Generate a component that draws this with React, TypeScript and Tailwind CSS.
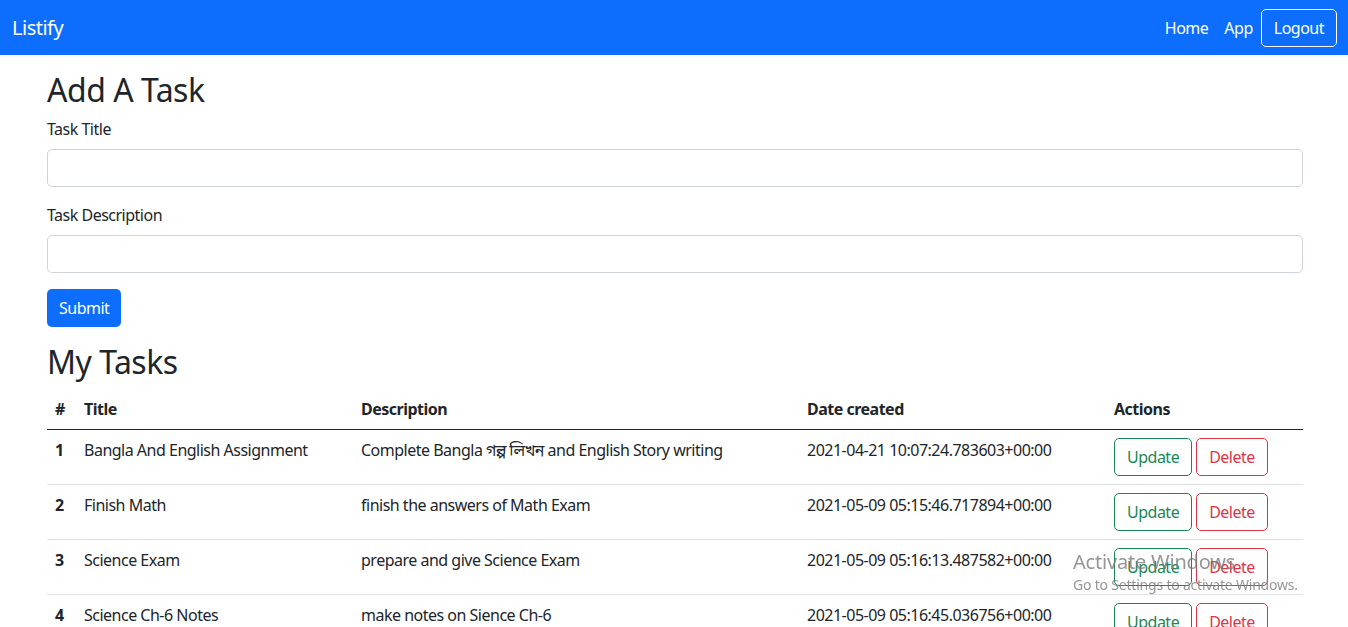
const tasks = [
  {
    id: 1,
    title: "Bangla And English Assignment",
    description: "Complete Bangla গল্প লিখন and English Story writing",
    created: "2021-04-21 10:07:24.783603+00:00",
  },
  {
    id: 2,
    title: "Finish Math",
    description: "finish the answers of Math Exam",
    created: "2021-05-09 05:15:46.717894+00:00",
  },
  {
    id: 3,
    title: "Science Exam",
    description: "prepare and give Science Exam",
    created: "2021-05-09 05:16:13.487582+00:00",
  },
  {
    id: 4,
    title: "Science Ch-6 Notes",
    description: "make notes on Sience Ch-6",
    created: "2021-05-09 05:16:45.036756+00:00",
  },
];

const font = "font-['Segoe_UI','Noto_Sans','Noto_Sans_Bengali',sans-serif]";

export default function App() {
  return (
    <div className={`min-h-screen bg-white text-[16px] leading-6 tracking-[-0.5px] text-[#212529] ${font}`}>
      {/* ── Navbar ─────────────────────────────────────────── */}
      <nav className="flex h-[55px] items-center justify-between bg-[#0d6efd] pl-3 pr-[11px]">
        <a className="text-[20px] leading-[30px] text-white">Listify</a>
        <div className="flex items-center">
          <a className="px-2 text-white">Home</a>
          <a className="px-2 text-white">App</a>
          <button className="h-[38px] rounded-[5px] border border-white px-3 text-white">
            Logout
          </button>
        </div>
      </nav>

      <main className="pl-[47px] pr-[45px] pt-4">
        {/* ── Form ─────────────────────────────────────────── */}
        <h2 className="mb-2 text-[32px] font-normal leading-[38px]">Add A Task</h2>

        <div className="mb-4">
          <label className="mb-2 block">Task Title</label>
          <input className="block h-[38px] w-full rounded-[5px] border border-[#ced4da] px-3 outline-none" />
        </div>

        <div className="mb-4">
          <label className="mb-2 block">Task Description</label>
          <input className="block h-[38px] w-full rounded-[5px] border border-[#ced4da] px-3 outline-none" />
        </div>

        <button className="h-[38px] rounded-[5px] bg-[#0d6efd] px-3 text-white">Submit</button>

        {/* ── Task table ───────────────────────────────────── */}
        <h2 className="mb-2 mt-4 text-[32px] font-normal leading-[38px]">My Tasks</h2>

        <table className="w-full table-fixed border-collapse text-left">
          <thead>
            <tr className="border-b border-[#212529]">
              <th className="w-[29px] p-2 font-bold">#</th>
              <th className="w-[277px] p-2 font-bold">Title</th>
              <th className="w-[446px] p-2 font-bold">Description</th>
              <th className="w-[307px] p-2 font-bold">Date created</th>
              <th className="p-2 font-bold">Actions</th>
            </tr>
          </thead>
          <tbody>
            {tasks.map((t) => (
              <tr key={t.id} className="border-b border-[#dee2e6] align-top">
                <th className="p-2 font-bold">{t.id}</th>
                <td className="p-2">{t.title}</td>
                <td className="p-2">{t.description}</td>
                <td className="p-2">{t.created}</td>
                <td className="p-2">
                  <div className="flex gap-1">
                    <button className="h-[38px] rounded-[5px] border border-[#198754] px-3 text-[#198754]">
                      Update
                    </button>
                    <button className="h-[38px] rounded-[5px] border border-[#dc3545] px-3 text-[#dc3545]">
                      Delete
                    </button>
                  </div>
                </td>
              </tr>
            ))}
          </tbody>
        </table>
      </main>

      {/* OS watermark sitting over the page */}
      <div className="pointer-events-none fixed left-[1073px] top-[548px] tracking-[-0.2px] text-[#7a7a7a]/80">
        <div className="text-[20px] leading-[28px]">Activate Windows</div>
        <div className="text-[14px] leading-[18px]">Go to Settings to activate Windows.</div>
      </div>
    </div>
  );
}
